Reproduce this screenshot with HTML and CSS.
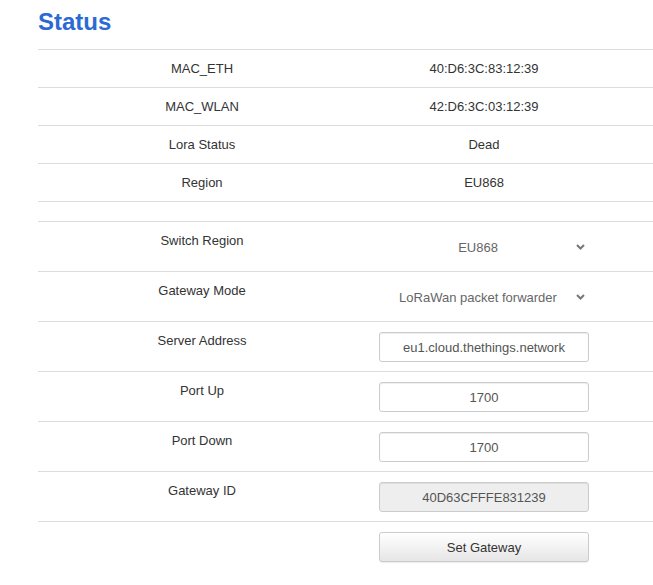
FILE: index.html
```html
<!DOCTYPE html>
<html>
<head>
<meta charset="utf-8">
<link rel="stylesheet" href="styles.css">
</head>
<body>
<div class="page">
  <h1 class="title">Status</h1>
  <div class="table">
    <div class="row info"><div class="label">MAC_ETH</div><div class="value">40:D6:3C:83:12:39</div></div>
    <div class="row info"><div class="label">MAC_WLAN</div><div class="value">42:D6:3C:03:12:39</div></div>
    <div class="row info"><div class="label">Lora Status</div><div class="value">Dead</div></div>
    <div class="row info"><div class="label">Region</div><div class="value">EU868</div></div>
    <div class="row spacer"></div>
    <div class="row form">
      <div class="label">Switch Region</div>
      <div class="value">
        <div class="select-wrap">
          <select class="select"><option>EU868</option><option>US915</option></select>
          <svg class="chev" width="9" height="6" viewBox="0 0 9 6"><path d="M1 1 L4.5 4.5 L8 1" fill="none" stroke="#777" stroke-width="2"/></svg>
        </div>
      </div>
    </div>
    <div class="row form">
      <div class="label">Gateway Mode</div>
      <div class="value">
        <div class="select-wrap">
          <select class="select"><option>LoRaWan packet forwarder</option></select>
          <svg class="chev" width="9" height="6" viewBox="0 0 9 6"><path d="M1 1 L4.5 4.5 L8 1" fill="none" stroke="#777" stroke-width="2"/></svg>
        </div>
      </div>
    </div>
    <div class="row form"><div class="label">Server Address</div><div class="value"><input class="input" type="text" value="eu1.cloud.thethings.network"></div></div>
    <div class="row form"><div class="label">Port Up</div><div class="value"><input class="input" type="text" value="1700"></div></div>
    <div class="row form"><div class="label">Port Down</div><div class="value"><input class="input" type="text" value="1700"></div></div>
    <div class="row form"><div class="label">Gateway ID</div><div class="value"><input class="input" type="text" value="40D63CFFFE831239" disabled></div></div>
    <div class="row form"><div class="label"></div><div class="value"><button class="btn" type="button">Set Gateway</button></div></div>
  </div>
</div>
</body>
</html>
```

FILE: styles.css
```css
html, body {
  margin: 0;
  padding: 0;
  background: #fff;
}
body {
  font-family: "Liberation Sans", Arial, sans-serif;
  font-size: 13px;
  color: #333;
}
.page {
  padding: 9px 0 0 38px;
}
.title {
  margin: 0 0 14px 0;
  font-size: 24px;
  line-height: 26px;
  font-weight: bold;
  color: #2b6ad3;
}
.row {
  display: flex;
  border-top: 1px solid #ddd;
}
.label {
  width: 328px;
  text-align: center;
}
.value {
  width: 236px;
  text-align: center;
}
.info .label, .info .value {
  padding: 9px 0;
  line-height: 19px;
}
.spacer {
  height: 19px;
}
.form .label {
  padding-top: 9px;
  line-height: 19px;
}
.form .value {
  padding: 10px 13px 9px 13px;
  box-sizing: border-box;
}
.select-wrap {
  position: relative;
  height: 30px;
}
.select {
  -webkit-appearance: none;
  appearance: none;
  width: 100%;
  height: 30px;
  border: none;
  background: transparent;
  font-family: "Liberation Sans", Arial, sans-serif;
  font-size: 13px;
  color: #666;
  text-align: center;
  text-align-last: center;
  padding: 0 12px 0 0;
  margin: 0;
  outline: none;
}
.chev {
  position: absolute;
  right: 4px;
  top: 12px;
}
.input {
  display: block;
  width: 100%;
  height: 30px;
  box-sizing: border-box;
  border: 1px solid #ccc;
  border-radius: 3px;
  box-shadow: inset 0 1px 1px rgba(0,0,0,0.075);
  background: #fff;
  font-family: "Liberation Sans", Arial, sans-serif;
  font-size: 13px;
  color: #555;
  text-align: center;
  padding: 0 6px;
  margin: 0;
}
.input:disabled {
  background: #eee;
  color: #555;
}
.btn {
  display: block;
  width: 100%;
  height: 30px;
  box-sizing: border-box;
  border: 1px solid #ccc;
  border-radius: 3px;
  background: linear-gradient(#fff, #e6e6e6);
  box-shadow: 0 1px 1px rgba(0,0,0,0.08);
  font-family: "Liberation Sans", Arial, sans-serif;
  font-size: 13px;
  color: #333;
  margin: 0;
  padding: 0;
}
```
